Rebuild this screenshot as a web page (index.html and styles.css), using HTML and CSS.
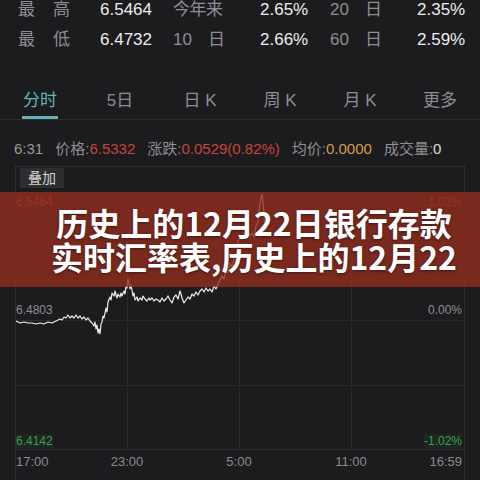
FILE: index.html
```html
<!DOCTYPE html>
<html lang="zh-CN">
<head>
    <meta charset="UTF-8">
    <meta name="viewport" content="width=device-width, initial-scale=1.0">
    <title>汇率分时</title>
    <link rel="stylesheet" href="styles.css">
</head>
<body>
    <div class="stats">
        <div class="stats-row">
            <span class="label"><i>最</i><i>高</i></span>
            <span class="value">6.5464</span>
            <span class="label wide">今年来</span>
            <span class="value">2.65%</span>
            <span class="label"><i>20</i><i>日</i></span>
            <span class="value right">2.35%</span>
        </div>
        <div class="stats-row">
            <span class="label"><i>最</i><i>低</i></span>
            <span class="value">6.4732</span>
            <span class="label"><i>10</i><i>日</i></span>
            <span class="value">2.66%</span>
            <span class="label"><i>60</i><i>日</i></span>
            <span class="value right">2.59%</span>
        </div>
    </div>

    <div class="tabs">
        <div class="tab active"><span>分时</span></div>
        <div class="tab"><span>5日</span></div>
        <div class="tab"><span>日 K</span></div>
        <div class="tab"><span>周 K</span></div>
        <div class="tab"><span>月 K</span></div>
        <div class="tab"><span>更多</span></div>
    </div>

    <div class="quote">
        <span class="time">6:31</span>
        <span>价格:<b class="up">6.5332</b></span>
        <span>涨跌:<b class="up">0.0529(0.82%)</b></span>
        <span>均价:<b class="avg">0.0000</b></span>
        <span>成交量:<b class="vol">0</b></span>
    </div>

    <div class="chart">
        <div class="chart-top">
            <span class="overlay-btn">叠加</span>
        </div>
        <div class="plot">
            <svg class="plot-svg" width="448" height="257" viewBox="16 192 448 257">
                <g stroke="#2a2a2c" stroke-width="1">
                    <line x1="16" y1="256.5" x2="464" y2="256.5"/>
                    <line x1="16" y1="320.5" x2="464" y2="320.5"/>
                    <line x1="16" y1="385.5" x2="464" y2="385.5"/>
                    <line x1="127.5" y1="192" x2="127.5" y2="449"/>
                    <line x1="239.5" y1="192" x2="239.5" y2="449"/>
                    <line x1="351.5" y1="192" x2="351.5" y2="449"/>
                </g>
                <polyline fill="none" stroke="#ececec" stroke-width="1.2" stroke-linejoin="round"
                    points="16,321 18,322 20,323 24,322 28,323 32,323 36,324 40,323 44,324 48,322 52,323 56,321 60,319 62,320 64,317 66,318 68,315 70,318 72,316 74,318 76,315 78,318 80,316 82,319 84,317 86,320 88,318 90,321 92,323 94,326 95,322 96,329 97,325 98,333 99,329 100,334 101,324 102,322 103,316 104,318 106,308 107,312 108,302 110,297 111,300 112,293 114,296 115,291 116,295 117,298 118,294 120,297 121,293 122,296 124,291 125,294 126,286 127,288 128,279 129,284 130,289 131,285 132,290 133,296 134,293 135,300 137,297 138,301 140,298 142,300 143,296 145,299 147,301 149,298 150,300 152,298 154,301 156,299 158,300 160,302 162,298 164,301 166,299 168,296 170,300 172,303 174,297 176,295 178,299 180,291 181,294 182,298 184,303 186,300 188,297 190,299 192,294 194,296 196,292 198,295 200,291 202,289 204,292 206,288 208,291 210,289 212,292 214,286 216,289 218,284 220,280 222,276 224,279 226,270 228,273 230,263 232,268 234,258 236,262 238,242 240,236 242,240 244,233 246,238 248,231 250,236 252,233 254,237 256,226 258,222 259,210 260,204 261,197 262,194 263,202 264,215 265,230 266,226 267,229"/>
            </svg>
            <span class="axis-label top-left up">6.5464</span>
            <span class="axis-label top-right up">1.02%</span>
            <span class="axis-label mid-left">6.4803</span>
            <span class="axis-label mid-right">0.00%</span>
            <span class="axis-label bottom-left down">6.4142</span>
            <span class="axis-label bottom-right down">-1.02%</span>
        </div>
        <div class="xaxis">
            <span class="first">17:00</span>
            <span>23:00</span>
            <span>5:00</span>
            <span>11:00</span>
            <span class="last">16:59</span>
        </div>
    </div>

    <div class="banner">
        <span class="banner-line">历史上的12月22日银行存款</span>
        <span class="banner-line">实时汇率表,历史上的12月22</span>
    </div>
</body>
</html>
```

FILE: styles.css
```css
body {
    margin: 0;
    height: 480px;
    overflow: hidden;
    position: relative;
    background-color: #1c1c1e;
    color: #e6e6e6;
    font-family: "Liberation Sans", "Noto Sans CJK SC", sans-serif;
}
.stats {
    display: flex;
    flex-direction: column;
    gap: 10px;
    padding-left: 18px;
    font-size: 17px;
    line-height: 20px;
}
.stats-row {
    display: grid;
    grid-template-columns: 82px 73px 87px 70px 87px 45px;
    white-space: nowrap;
}
.stats .label {
    display: flex;
    justify-content: space-between;
    width: 52px;
    color: #8e8e93;
}
.stats .label.wide {
    width: auto;
    letter-spacing: -0.5px;
}
.stats .label i {
    font-style: normal;
}
.stats .value {
    color: #ececec;
}
.stats .value.right {
    text-align: right;
}

.tabs {
    display: flex;
    margin-top: 38px;
    border-bottom: 1px solid #2c2c2e;
}
.tab {
    flex: 1;
    text-align: center;
    font-size: 17px;
    color: #8e8e93;
}
.tab span {
    display: inline-block;
    line-height: 26px;
    padding: 0 1px 2px;
    border-bottom: 3px solid transparent;
}
.tab.active span {
    color: #5fb4ba;
    border-bottom-color: #5fb4ba;
}

.quote {
    display: flex;
    gap: 12px;
    padding: 19px 14px 7px;
    font-size: 15px;
    line-height: 20px;
    color: #8e8e93;
    white-space: nowrap;
}
.quote b {
    font-weight: normal;
}
.quote .time {
    color: #9a9a9e;
}
.up {
    color: #c8433b;
}
.down {
    color: #3f9b55;
}
.avg {
    color: #d39d4f;
}
.vol {
    color: #dcdcdc;
}

.chart {
    margin: 0 15px;
    height: 314px;
    border: 1px solid #2e2e30;
    border-bottom: none;
}
.chart-top {
    height: 25px;
}
.overlay-btn {
    display: inline-block;
    margin: 1px 0 0 4px;
    padding: 0 8px;
    line-height: 20px;
    font-size: 14px;
    color: #d4d4d4;
    background-color: #2e2e30;
}
.plot {
    position: relative;
    height: 257px;
}
.plot-svg {
    display: block;
}
.axis-label {
    position: absolute;
    font-size: 12px;
    line-height: 14px;
    color: #8e8e93;
}
.top-left { top: 3px; left: 0; }
.top-right { top: 3px; right: 2px; }
.mid-left { top: 111px; left: 0; }
.mid-right { top: 111px; right: 2px; }
.bottom-left { top: 242px; left: 0; background-color: #1d2620; }
.bottom-right { top: 242px; right: 2px; background-color: #1d2620; }
.axis-label.up { color: #c8433b; }
.axis-label.down { color: #3f9b55; }

.xaxis {
    display: grid;
    grid-template-columns: 55px 112px 112px 112px 57px;
    border-top: 1px solid #2e2e30;
    font-size: 13px;
    line-height: 24px;
    color: #8a8a8e;
    text-align: center;
}
.xaxis .first {
    text-align: left;
}
.xaxis .last {
    text-align: right;
    padding-right: 2px;
}

.banner {
    position: absolute;
    top: 192px;
    left: 0;
    right: 0;
    height: 95px;
    box-sizing: border-box;
    padding: 13px 0 0 28px;
    background-color: rgba(145, 45, 30, 0.8);
    text-align: center;
    font-family: "Noto Sans CJK SC", sans-serif;
    font-weight: bold;
    font-size: 32px;
    line-height: 34px;
    color: #ffffff;
    text-shadow: 0 1px 3px rgba(0, 0, 0, 0.45);
}
.banner-line {
    display: block;
    white-space: nowrap;
}
```
